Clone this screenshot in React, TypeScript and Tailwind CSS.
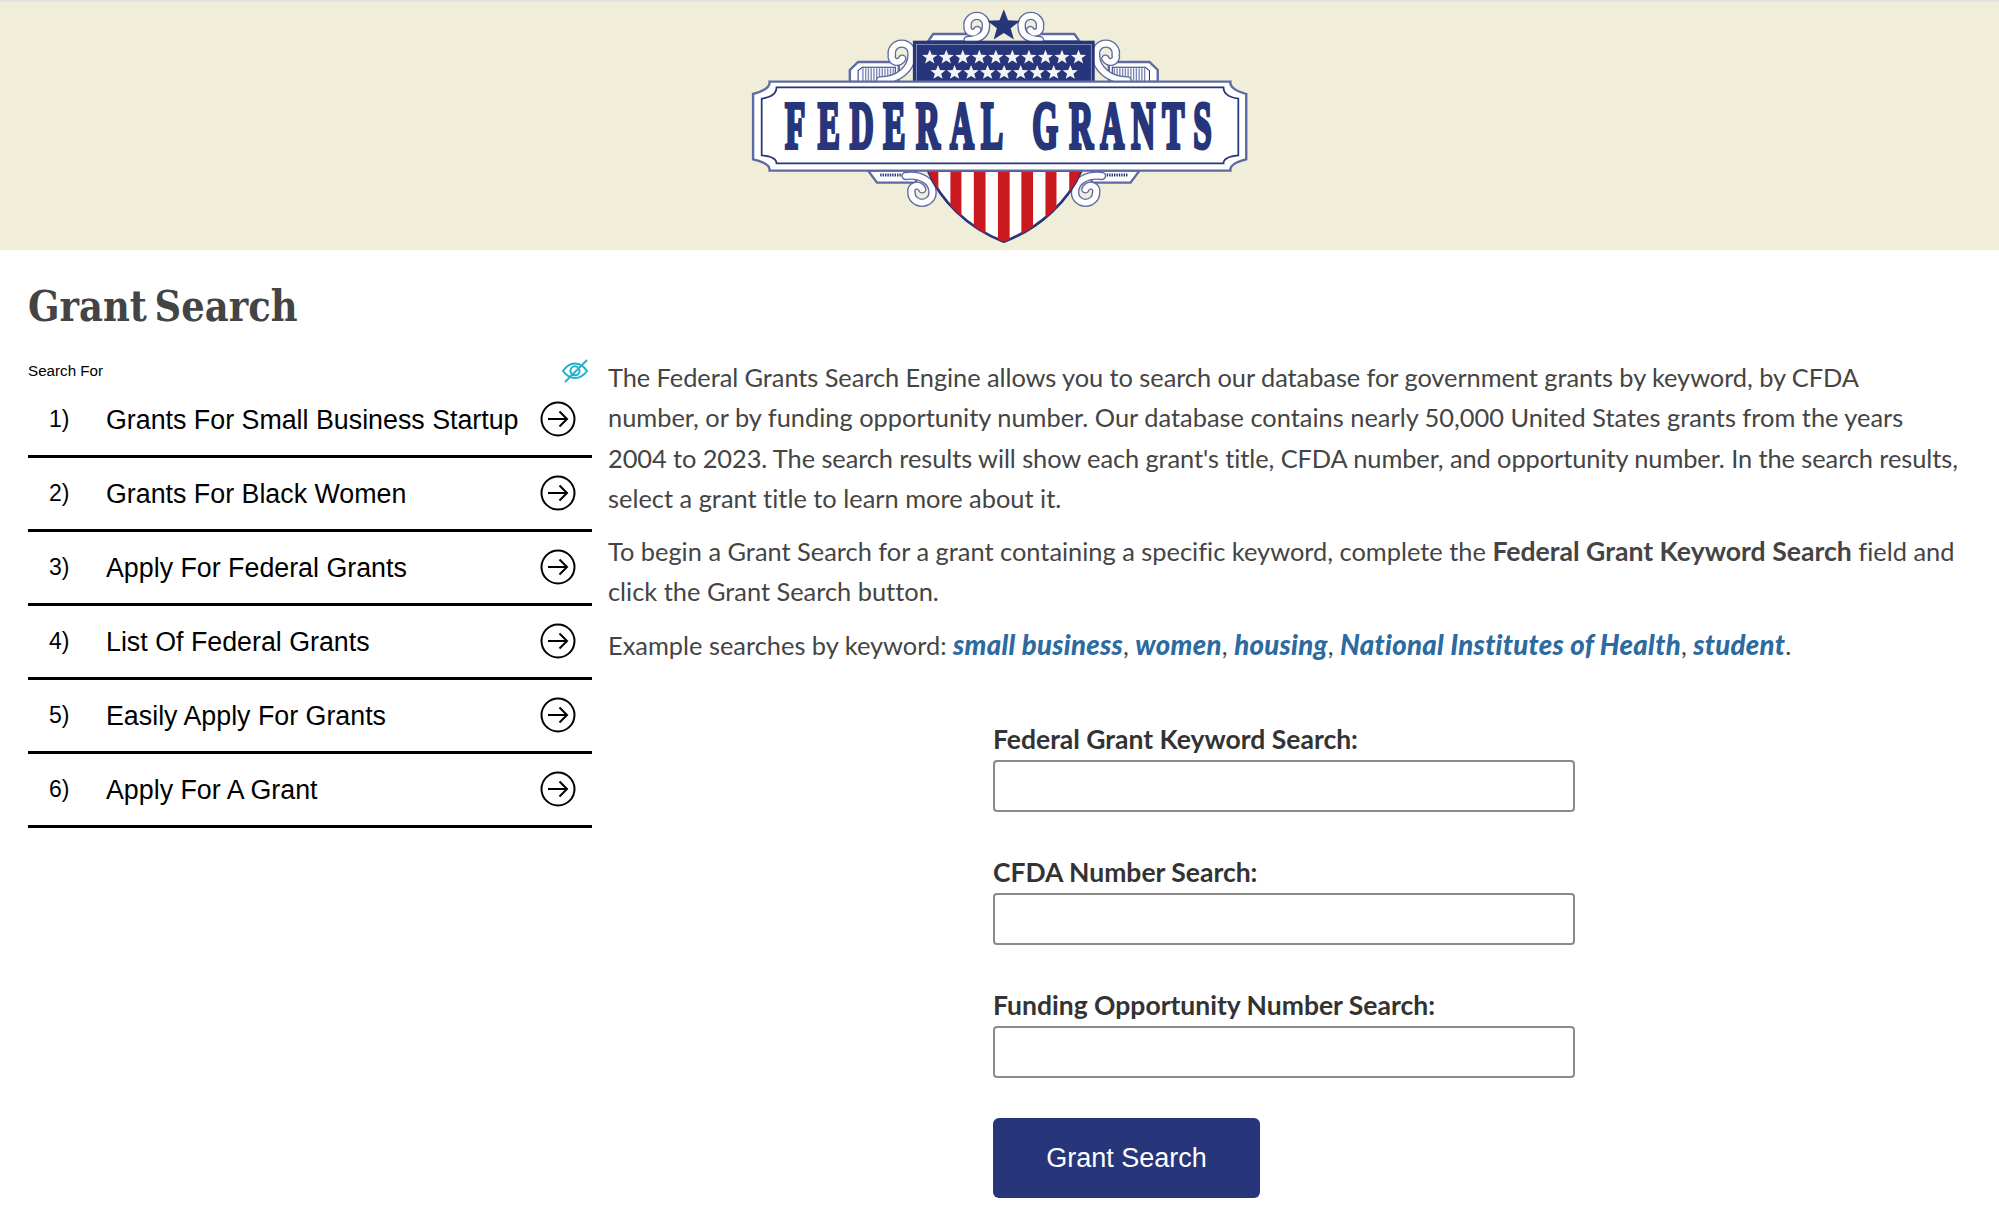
const searches = [
  "Grants For Small Business Startup",
  "Grants For Black Women",
  "Apply For Federal Grants",
  "List Of Federal Grants",
  "Easily Apply For Grants",
  "Apply For A Grant",
];

const fields = [
  "Federal Grant Keyword Search:",
  "CFDA Number Search:",
  "Funding Opportunity Number Search:",
];

const links = ["small business", "women", "housing", "National Institutes of Health", "student"];

const NAVY = "#27367b";
const RED = "#cb1a1f";
const LINE = "#5f6aa3";

function starPoints(cx: number, cy: number, r: number) {
  const pts: string[] = [];
  for (let i = 0; i < 10; i++) {
    const rad = i % 2 === 0 ? r : r * 0.42;
    const a = -Math.PI / 2 + (i * Math.PI) / 5;
    pts.push(`${cx + rad * Math.cos(a)},${cy + rad * Math.sin(a)}`);
  }
  return pts.join(" ");
}

function Scroll({ d }: { d: string }) {
  return (
    <g fill="none" strokeLinecap="round">
      <path d={d} stroke={LINE} strokeWidth="25" />
      <path d={d} stroke="#fff" strokeWidth="17" />
    </g>
  );
}

// left half of the crest ornaments, mirrored for the right half
function Ornaments() {
  return (
    <>
      <path d="M575 124L590 102H720V124Z" fill="#fff" stroke={LINE} strokeWidth="7" />
      <path d="M348 246V210L372 186H490V246Z" fill="#fff" stroke={LINE} strokeWidth="7" />
      <path d="M372 246V212L384 202H480V246Z" fill="#fff" stroke={NAVY} strokeWidth="3" />
      <line x1="384" y1="225" x2="480" y2="225" stroke="#7f88b6" strokeWidth="40" strokeDasharray="4 4" />
      <path d="M401 512L427 548H540V512Z" fill="#fff" stroke={LINE} strokeWidth="7" />
      <line x1="436" y1="525" x2="520" y2="525" stroke={NAVY} strokeWidth="9" strokeDasharray="4 3" />
      <Scroll d="M690 120C722 120 743 104 743 80A27 27 0 1 0 690 80A15 15 0 0 0 718 90" />
      <Scroll d="M436 241C490 240 528 205 527 165A29 29 0 1 0 470 165A16 16 0 0 0 500 176" />
      <Scroll d="M510 528C555 522 590 545 588 578A30 30 0 1 1 527 578A16 16 0 0 1 558 568" />
    </>
  );
}

function Logo() {
  const letterX = [160, 255, 348, 445, 540, 639, 729, 878, 985, 1075, 1165, 1255, 1345];
  const stripes = [
    [640, 672],
    [708, 742],
    [778, 812],
    [846, 880],
    [916, 948],
    [985, 1025],
    [560, 605],
  ];
  const shield = "M575 512H1020C985 600 900 685 795 725C690 685 610 600 575 512Z";
  return (
    <svg width="540" height="248" viewBox="0 6 1568 744" preserveAspectRatio="none">
      <defs>
        <clipPath id="shield">
          <path d={shield} />
        </clipPath>
      </defs>

      <Ornaments />
      <g transform="translate(1590 0) scale(-1 1)">
        <Ornaments />
      </g>

      {/* top star and star field */}
      <polygon points={starPoints(795, 78, 50)} fill={NAVY} />
      <rect x="531" y="122" width="528" height="128" fill={NAVY} />
      <rect x="541" y="133" width="508" height="120" fill="none" stroke="#aab0d0" strokeWidth="2" />
      {Array.from({ length: 10 }, (_, i) => (
        <polygon key={i} points={starPoints(580 + i * 48, 172, 23)} fill="#f4f4f4" />
      ))}
      {Array.from({ length: 9 }, (_, i) => (
        <polygon key={i} points={starPoints(604 + i * 48, 218, 23)} fill="#f4f4f4" />
      ))}

      {/* shield */}
      <path d={shield} fill="#fff" stroke={NAVY} strokeWidth="8" />
      <g clipPath="url(#shield)">
        {stripes.map(([a, b]) => (
          <rect key={a} x={a} y="505" width={b - a} height="225" fill={RED} />
        ))}
      </g>

      {/* banner */}
      <path
        d="M115 245H1453Q1450 268 1499 282V478Q1450 490 1453 512H115Q118 490 67 478V282Q118 268 115 245Z"
        fill="#fff"
        stroke={LINE}
        strokeWidth="7"
      />
      <path
        d="M135 262H1433Q1433 290 1476 296V466Q1433 470 1433 490H135Q135 470 92 466V296Q135 290 135 262Z"
        fill="#fff"
        stroke={NAVY}
        strokeWidth="5"
      />
      <g transform="scale(0.47 1)">
        <text
          x={letterX.map((x) => x / 0.47).join(" ")}
          y="444"
          fill={NAVY}
          stroke={NAVY}
          strokeWidth="12"
          fontSize="205"
          fontWeight="700"
          className="font-['Liberation_Serif']"
        >
          FEDERALGRANTS
        </text>
      </g>
    </svg>
  );
}

function EyeIcon() {
  return (
    <svg width="28" height="24" viewBox="0 0 28 24" fill="none" stroke="#1fb3cf" strokeWidth="2">
      <path d="M2 12C6 6 10 4.500 14 4.500S22 6 26 12C22 17.500 18 19 14 19S6 17.500 2 12Z" />
      <circle cx="14" cy="11.800" r="4.500" />
      <path d="M4 23L26 1" />
    </svg>
  );
}

function ArrowCircle() {
  return (
    <svg width="36" height="36" viewBox="0 0 36 36" fill="none" stroke="#000" strokeWidth="2" className="mr-[16px] mb-[1px]">
      <circle cx="18" cy="18" r="16.500" />
      <path d="M8 18H27M19.500 10.500L27 18L19.500 25.500" />
    </svg>
  );
}

export default function App() {
  return (
    <div className="h-[1206px] overflow-hidden bg-white font-['Lato',sans-serif] text-[25.400px] leading-[40.300px] text-[#444] [font-variant-ligatures:no-common-ligatures]">
      <header className="flex h-[250px] justify-center border-t-2 border-[#dfe3e6] bg-[#f0eed8]">
        <Logo />
      </header>

      <main className="px-[28px]">
        <h1 className="w-fit origin-left scale-x-[0.88] pt-[32px] font-['DejaVu_Serif',serif] text-[42px] leading-[50px] font-bold whitespace-nowrap text-[#444] [word-spacing:-6px]">
          Grant Search
        </h1>

        <div className="mt-[25px] flex items-start">
          <aside className="w-[564px] shrink-0 font-['Liberation_Sans',sans-serif] text-black">
            <div className="flex h-[27px] items-center justify-between pr-[3px]">
              <span className="text-[15.200px] leading-[24px]">Search For</span>
              <EyeIcon />
            </div>
            <ol>
              {searches.map((title, i) => (
                <li key={title} className="flex h-[74px] items-center border-b-[3px] border-black">
                  <span className="w-[78px] pl-[21px] text-[23px]">{i + 1})</span>
                  <span className="flex-1 text-[26.800px] leading-[36px] whitespace-nowrap">{title}</span>
                  <ArrowCircle />
                </li>
              ))}
            </ol>
          </aside>

          <section className="ml-[16px] min-w-0 flex-1">
            <p className="mb-[13px]">
              <span className="block tracking-[-0.060px] whitespace-nowrap">
                The Federal Grants Search Engine allows you to search our database for government grants by keyword, by CFDA
              </span>
              <span className="block whitespace-nowrap">
                number, or by funding opportunity number. Our database contains nearly 50,000 United States grants from the years
              </span>
              <span className="block tracking-[-0.080px] whitespace-nowrap">
                2004 to 2023. The search results will show each grant's title, CFDA number, and opportunity number. In the search results,
              </span>
              <span className="block whitespace-nowrap">select a grant title to learn more about it.</span>
            </p>
            <p className="mb-[13px]">
              <span className="block whitespace-nowrap">
                To begin a Grant Search for a grant containing a specific keyword, complete the{" "}
                <strong className="text-[26.600px] font-bold">Federal Grant Keyword Search</strong> field and
              </span>
              <span className="block whitespace-nowrap">click the Grant Search button.</span>
            </p>
            <p className="whitespace-nowrap">
              Example searches by keyword:{" "}
              {links.map((link, i) => (
                <span key={link}>
                  <a className="text-[27.500px] font-black tracking-[0.300px] text-[#2c6a9f] italic">{link}</a>
                  {i < links.length - 1 ? ", " : "."}
                </span>
              ))}
            </p>

            <form className="mt-[59px] ml-[385px] w-[582px]">
              <div className="mb-[40px] flex flex-col gap-[45px]">
                {fields.map((label) => (
                  <label key={label} className="block">
                    <span className="mb-[6px] block text-[26.500px] leading-[30px] font-bold text-[#333]">{label}</span>
                    <input type="text" className="block h-[52px] w-full rounded-[4px] border-2 border-[#8a8a8a] bg-white" />
                  </label>
                ))}
              </div>
              <button
                type="button"
                className="h-[80px] w-[267px] rounded-[6px] bg-[#27367b] font-['Liberation_Sans',sans-serif] text-[27px] text-white"
              >
                Grant Search
              </button>
            </form>
          </section>
        </div>
      </main>
    </div>
  );
}
